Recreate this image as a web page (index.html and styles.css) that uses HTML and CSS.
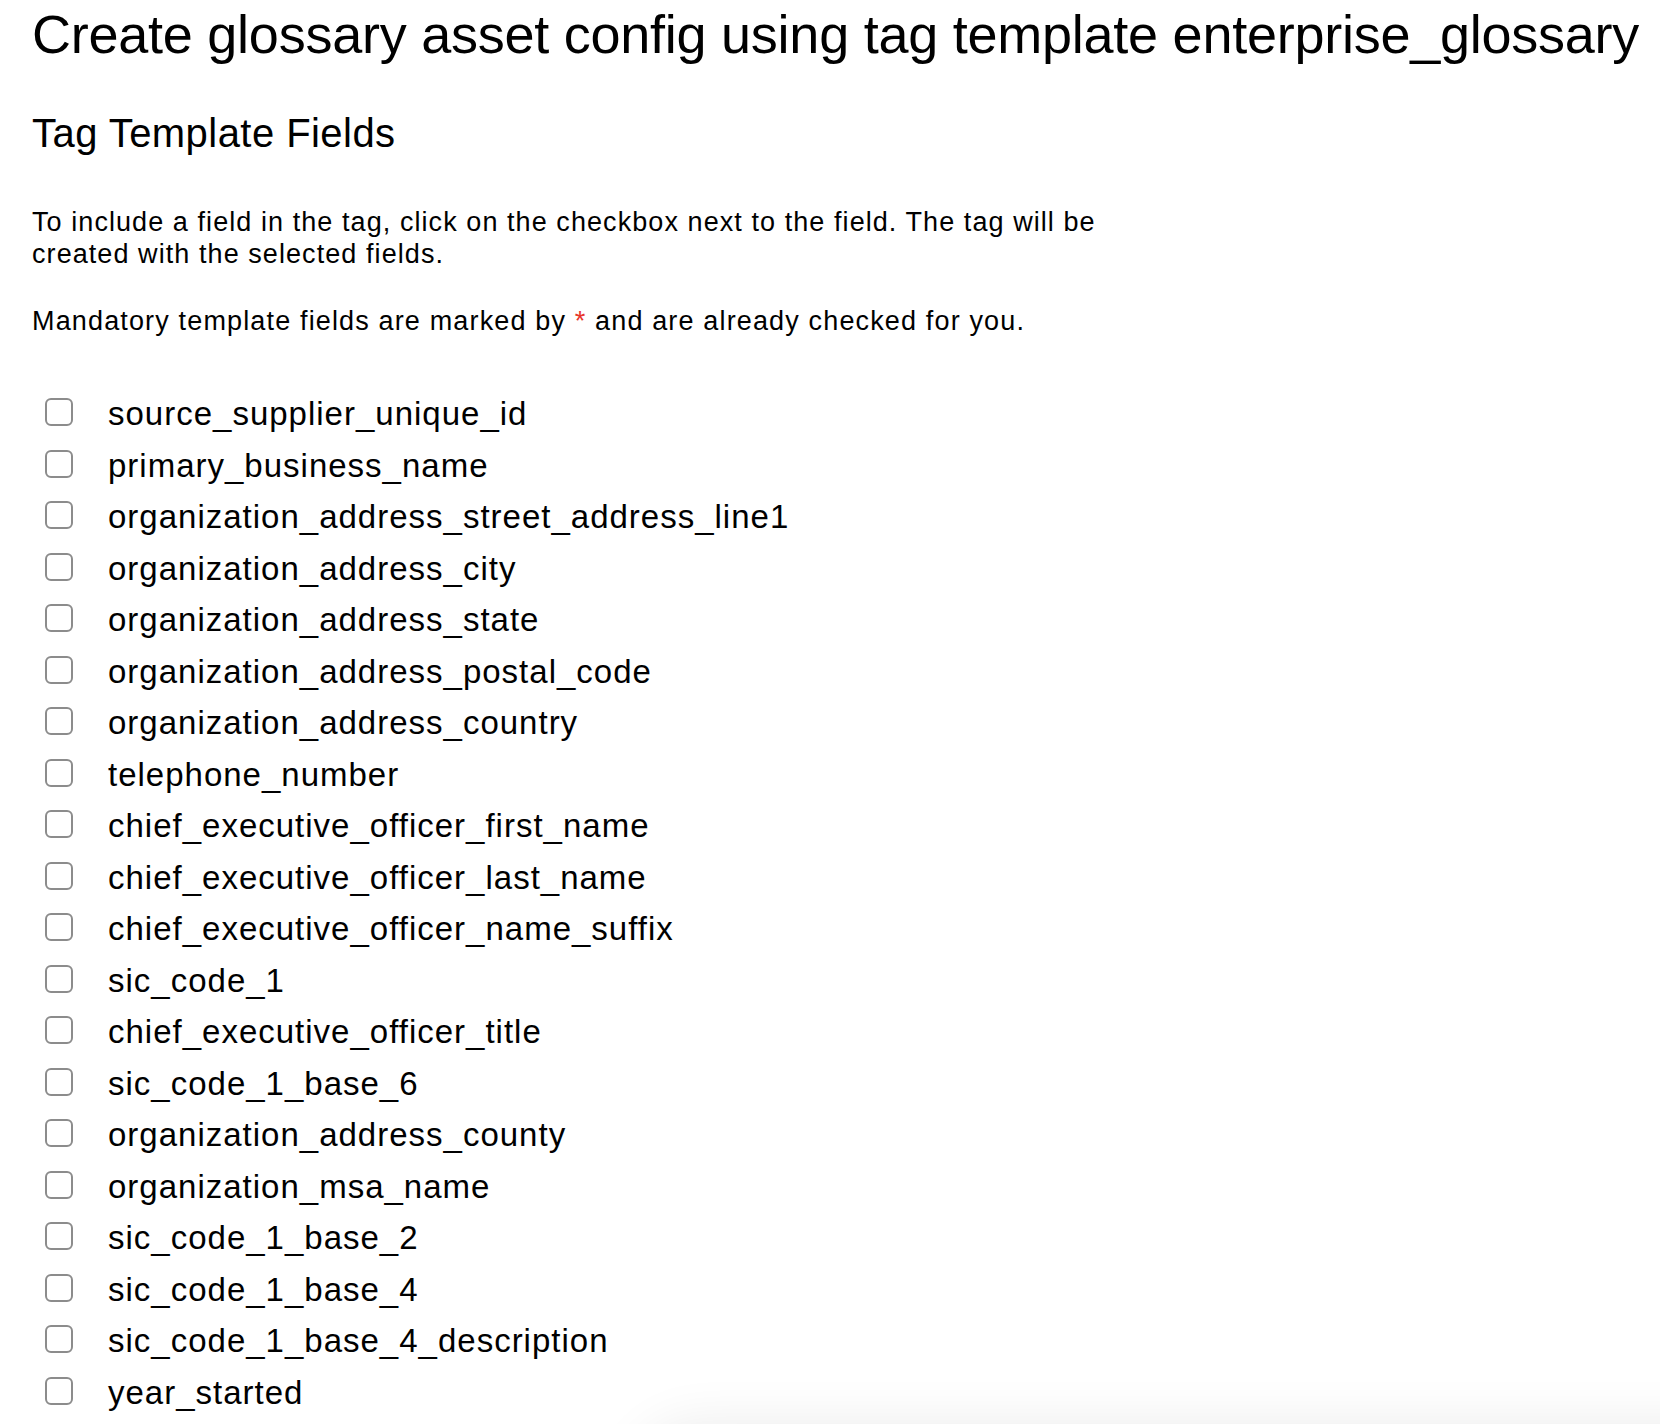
FILE: index.html
```html
<!DOCTYPE html>
<html lang="en">
<head>
<meta charset="utf-8">
<title>Create glossary asset config</title>
<link rel="stylesheet" href="styles.css">
</head>
<body>
<main class="page">
  <h1 class="title">Create glossary asset config using tag template enterprise_glossary</h1>
  <h2 class="subtitle">Tag Template Fields</h2>
  <p class="intro">To include a field in the tag, click on the checkbox next to the field. The tag will be<br>created with the selected fields.</p>
  <p class="note">Mandatory template fields are marked by <span class="req">*</span> and are already checked for you.</p>
  <ul class="fields">
    <li class="field"><input type="checkbox" class="box" id="f1"><label for="f1">source_supplier_unique_id</label></li>
    <li class="field"><input type="checkbox" class="box" id="f2"><label for="f2">primary_business_name</label></li>
    <li class="field"><input type="checkbox" class="box" id="f3"><label for="f3">organization_address_street_address_line1</label></li>
    <li class="field"><input type="checkbox" class="box" id="f4"><label for="f4">organization_address_city</label></li>
    <li class="field"><input type="checkbox" class="box" id="f5"><label for="f5">organization_address_state</label></li>
    <li class="field"><input type="checkbox" class="box" id="f6"><label for="f6">organization_address_postal_code</label></li>
    <li class="field"><input type="checkbox" class="box" id="f7"><label for="f7">organization_address_country</label></li>
    <li class="field"><input type="checkbox" class="box" id="f8"><label for="f8">telephone_number</label></li>
    <li class="field"><input type="checkbox" class="box" id="f9"><label for="f9">chief_executive_officer_first_name</label></li>
    <li class="field"><input type="checkbox" class="box" id="f10"><label for="f10">chief_executive_officer_last_name</label></li>
    <li class="field"><input type="checkbox" class="box" id="f11"><label for="f11">chief_executive_officer_name_suffix</label></li>
    <li class="field"><input type="checkbox" class="box" id="f12"><label for="f12">sic_code_1</label></li>
    <li class="field"><input type="checkbox" class="box" id="f13"><label for="f13">chief_executive_officer_title</label></li>
    <li class="field"><input type="checkbox" class="box" id="f14"><label for="f14">sic_code_1_base_6</label></li>
    <li class="field"><input type="checkbox" class="box" id="f15"><label for="f15">organization_address_county</label></li>
    <li class="field"><input type="checkbox" class="box" id="f16"><label for="f16">organization_msa_name</label></li>
    <li class="field"><input type="checkbox" class="box" id="f17"><label for="f17">sic_code_1_base_2</label></li>
    <li class="field"><input type="checkbox" class="box" id="f18"><label for="f18">sic_code_1_base_4</label></li>
    <li class="field"><input type="checkbox" class="box" id="f19"><label for="f19">sic_code_1_base_4_description</label></li>
    <li class="field"><input type="checkbox" class="box" id="f20"><label for="f20">year_started</label></li>
  </ul>
</main>
<div class="fade" aria-hidden="true"></div>
</body>
</html>
```

FILE: styles.css
```css
html, body {
  margin: 0;
  padding: 0;
  background: #ffffff;
  overflow: hidden;
}

body {
  font-family: "Liberation Sans", Arial, Helvetica, sans-serif;
  color: #000000;
}

.page {
  padding-left: 32px;
}

.title {
  margin: 3px 0 0 0;
  font-size: 54px;
  line-height: 62px;
  font-weight: normal;
  letter-spacing: -0.25px;
  white-space: nowrap;
}

.subtitle {
  margin: 45px 0 0 0;
  font-size: 40px;
  line-height: 46px;
  font-weight: normal;
  letter-spacing: 0.45px;
}

.intro {
  margin: 50px 0 0 0;
  font-size: 27px;
  line-height: 32px;
  letter-spacing: 1.07px;
  white-space: nowrap;
}

.note {
  margin: 35px 0 0 0;
  font-size: 27px;
  line-height: 32px;
  letter-spacing: 1.15px;
  white-space: nowrap;
}

.req {
  color: #e8352b;
}

.fields {
  list-style: none;
  margin: 51px 0 0 0;
  padding: 0 0 0 13px;
}

.field {
  display: flex;
  align-items: center;
  gap: 35px;
  height: 51.5px;
  font-size: 33px;
  line-height: 51.5px;
  letter-spacing: 1px;
}

.box {
  appearance: none;
  -webkit-appearance: none;
  margin: -3px 0 0 0;
  width: 28px;
  height: 28px;
  box-sizing: border-box;
  border: 2px solid #8c8c8c;
  border-radius: 6px;
  background: #ffffff;
  flex: none;
}

.fade {
  position: fixed;
  left: 640px;
  right: -120px;
  top: 1432px;
  height: 120px;
  border-radius: 80px;
  box-shadow: 0 0 50px 12px rgba(0, 0, 0, 0.07);
  pointer-events: none;
}
```
